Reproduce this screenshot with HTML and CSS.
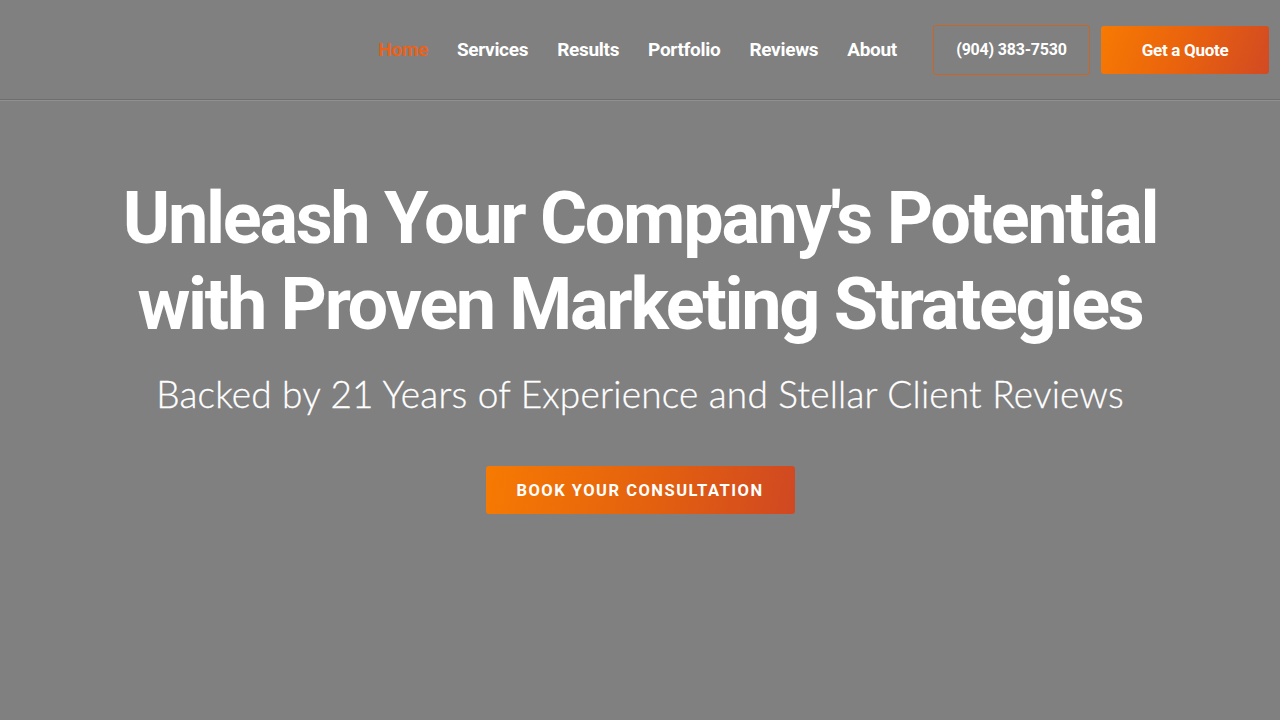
FILE: index.html
```html
<!DOCTYPE html>
<html lang="en">
<head>
<meta charset="utf-8">
<title>Marketing</title>
<link rel="stylesheet" href="styles.css">
</head>
<body>
<header class="site-header">
  <nav class="main-nav">
    <a class="nav-link active" href="#">Home</a>
    <a class="nav-link" href="#">Services</a>
    <a class="nav-link" href="#">Results</a>
    <a class="nav-link" href="#">Portfolio</a>
    <a class="nav-link" href="#">Reviews</a>
    <a class="nav-link" href="#">About</a>
  </nav>
  <div class="header-actions">
    <a class="btn-phone" href="#">(904) 383-7530</a>
    <a class="btn-quote" href="#">Get a Quote</a>
  </div>
</header>
<main class="hero">
  <h1 class="hero-title">Unleash Your Company's Potential<br>with Proven Marketing Strategies</h1>
  <p class="hero-sub">Backed by 21 Years of Experience and Stellar Client Reviews</p>
  <a class="btn-cta" href="#">BOOK YOUR CONSULTATION</a>
</main>
</body>
</html>
```
FILE: styles.css
```css
* { box-sizing: border-box; }
html, body { margin: 0; padding: 0; }
body {
  background: #808080;
  color: #fff;
  font-family: Roboto, "Liberation Sans", sans-serif;
  width: 1280px;
  height: 720px;
  overflow: hidden;
}
a { text-decoration: none; color: inherit; }
.site-header {
  height: 100px;
  display: flex;
  align-items: center;
  justify-content: flex-end;
  padding: 0 11px 0 0;
  border-bottom: 1px solid #6e6e6e;
  box-shadow: 0 1px 0 #909090;
}
.main-nav {
  display: flex;
  align-items: center;
  gap: 29px;
  margin-right: 36px;
}
.nav-link {
  font-size: 19px;
  font-weight: 700;
  color: #fff;
  letter-spacing: -0.3px;
}
.nav-link.active { color: #e8621c; }
.header-actions {
  display: flex;
  align-items: center;
  gap: 11px;
}
.btn-phone {
  width: 157px;
  height: 50px;
  border: 1px solid #c8662a;
  border-radius: 3px;
  display: flex;
  align-items: center;
  justify-content: center;
  font-size: 16px;
  font-weight: 700;
  letter-spacing: -0.2px;
}
.btn-quote {
  width: 168px;
  height: 48px;
  border-radius: 3px;
  background: linear-gradient(110deg, #f77a02 0%, #e9620e 50%, #d24a22 100%);
  display: flex;
  align-items: center;
  justify-content: center;
  font-size: 17px;
  font-weight: 700;
  letter-spacing: -0.3px;
}
.hero {
  display: flex;
  flex-direction: column;
  align-items: center;
  text-align: center;
  padding-top: 76px;
}
.hero-title {
  margin: 0;
  font-size: 72px;
  font-weight: 700;
  line-height: 86px;
  letter-spacing: -2.3px;
}
.hero-sub {
  margin: 21px 0 0;
  font-family: Lato, "Open Sans", sans-serif;
  font-weight: 300;
  font-size: 37px;
  line-height: 50px;
  letter-spacing: 0.2px;
  -webkit-text-stroke: 0.3px #fff;
}
.btn-cta {
  margin-top: 47px;
  width: 309px;
  height: 48px;
  border-radius: 3px;
  background: linear-gradient(100deg, #f77a02 0%, #e3600f 55%, #d04822 100%);
  display: flex;
  align-items: center;
  justify-content: center;
  font-size: 16.5px;
  font-weight: 700;
  letter-spacing: 1.5px;
}
```
